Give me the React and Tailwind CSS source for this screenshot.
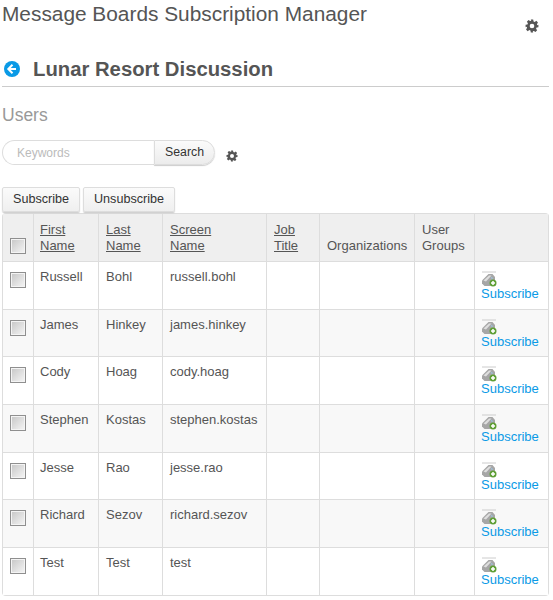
import React from 'react';

const users = [
  ['Russell', 'Bohl', 'russell.bohl'],
  ['James', 'Hinkey', 'james.hinkey'],
  ['Cody', 'Hoag', 'cody.hoag'],
  ['Stephen', 'Kostas', 'stephen.kostas'],
  ['Jesse', 'Rao', 'jesse.rao'],
  ['Richard', 'Sezov', 'richard.sezov'],
  ['Test', 'Test', 'test'],
];

const Gear = ({ className }) => (
  <svg viewBox="0 0 24 24" className={className} fill="#555">
    <path fillRule="evenodd" d="M10 1h4l.7 3.2 1.9.8 2.8-1.8 2.8 2.8-1.8 2.8.8 1.9L23 10v4l-3.2.7-.8 1.9 1.8 2.8-2.8 2.8-2.8-1.8-1.9.8L14 23h-4l-.7-3.2-1.9-.8-2.8 1.8-2.8-2.8 1.8-2.8-.8-1.9L1 14v-4l3.2-.7.8-1.9-1.8-2.8 2.8-2.8 2.8 1.8 1.9-.8zM12 8a4 4 0 1 0 0 8 4 4 0 0 0 0-8z" />
  </svg>
);

const BackIcon = () => (
  <svg viewBox="0 0 16 16" className="w-4 h-4 ml-[2px]">
    <circle cx="8" cy="8" r="8" fill="#0a9ae6" />
    <path d="M8.5 3.8 4.3 8l4.2 4.2M4.6 8h7.4" fill="none" stroke="#fff" strokeWidth="2" />
  </svg>
);

const SubscribeIcon = () => (
  <svg viewBox="0 0 16 16" className="w-4 h-4 block mb-[-1px]">
    <path d="M1 1h14" stroke="#ccc" strokeWidth="1" />
    <path d="M1 9.5 7.5 3h4l2.5 3v3l-5 6H3.5L1 12.5z" fill="#a6a6a6" />
    <path d="M2.5 9.5 8 4.5h2.5L5 10.5z" fill="#dedede" />
    <path d="M9.5 5.5 12 7l-1 1.5z" fill="#9cc3e0" />
    <circle cx="12" cy="12" r="3.5" fill="#5f9f35" />
    <path d="M12 10v4M10 12h4" stroke="#fff" strokeWidth="1.5" />
  </svg>
);

const Check = () => (
  <span className="block w-[16px] h-[16px] border border-[#8f8f8f] bg-gradient-to-br from-[#c6c6c6] to-[#f6f6f6] shadow-[inset_0_0_0_1px_#f4f4f4]" />
);

const Btn = ({ children }) => (
  <button className="h-[25px] px-[10px] text-[12.6px] text-[#333] border border-[#ddd] rounded-[2px] bg-gradient-to-b from-[#fbfbfb] to-[#efefef] shadow-[0_1px_1px_rgba(0,0,0,0.2)]">
    {children}
  </button>
);

const Th = ({ className = 'align-top pt-[8px] pb-[7px] pl-[7px]', children }) => (
  <th className={`border border-[#ddd] bg-[#efefef] pr-[7px] text-left font-normal leading-[16px] text-[13px] text-[#555] ${className}`}>
    {children}
  </th>
);

const Td = ({ className = 'pl-[7px]', children }) => (
  <td className={`border border-[#ddd] pr-[7px] pt-[7px] align-top leading-[16px] ${className}`}>{children}</td>
);

export default function App() {
  return (
    <div className="w-[553px] h-[600px] overflow-hidden bg-white font-['Liberation_Sans',Arial,sans-serif] text-[13px] text-[#555]">
      <div className="flex justify-between pl-[2px] pr-[14px]">
        <h1 className="text-[20.85px] leading-[28px]">Message Boards Subscription Manager</h1>
        <Gear className="w-[14px] h-[14px] mt-[19px]" />
      </div>

      <div className="mt-[11px] mx-[2px] w-[547px] h-[43px] pt-[8px] flex items-center border-b border-[#ccc]">
        <BackIcon />
        <h2 className="ml-[13px] text-[20.3px] font-bold leading-[28px]">Lunar Resort Discussion</h2>
      </div>

      <h3 className="ml-[2px] mt-[16px] text-[17.5px] leading-[24px] text-[#999]">Users</h3>

      <div className="ml-[2px] mt-[13px] flex items-center">
        <div className="flex h-[25px] w-[213px]">
          <input
            placeholder="Keywords"
            className="w-[152px] h-[25px] pl-[14px] border border-[#ddd] border-r-0 rounded-l-[13px] text-[12px] placeholder-[#bbb] outline-none"
          />
          <button className="flex-1 text-[#333] border border-[#ddd] rounded-r-[13px] bg-gradient-to-b from-[#fbfbfb] to-[#ececec] shadow-[0_1px_1px_rgba(0,0,0,0.2)] text-[12.3px]">
            Search
          </button>
        </div>
        <Gear className="w-[12px] h-[12px] ml-[11px] mt-[7px]" />
      </div>

      <div className="ml-[2px] mt-[22px] flex gap-[3px]">
        <Btn>Subscribe</Btn>
        <Btn>Unsubscribe</Btn>
      </div>

      <div className="ml-[2px] w-[547px] mt-px rounded-[4px] overflow-hidden">
        <table className="w-full table-fixed border-collapse">
          <colgroup>
            <col className="w-[31px]" />
            <col className="w-[65px]" />
            <col className="w-[64px]" />
            <col className="w-[104px]" />
            <col className="w-[53px]" />
            <col className="w-[95px]" />
            <col className="w-[60px]" />
            <col />
          </colgroup>
          <thead>
            <tr className="h-[47px]">
              <Th className="align-bottom pb-[7px] pl-[7px]"><Check /></Th>
              <Th className="align-top pt-[8px] pb-[7px] pl-[6px]"><span className="underline">First<br />Name</span></Th>
              <Th><span className="underline">Last<br />Name</span></Th>
              <Th><span className="underline">Screen<br />Name</span></Th>
              <Th><span className="underline">Job<br />Title</span></Th>
              <Th className="align-bottom pb-[7px] pl-[7px]">Organizations</Th>
              <Th>User<br />Groups</Th>
              <Th />
            </tr>
          </thead>
          <tbody>
            {users.map((u, i) => (
              <tr key={u[2]} className={`h-[47.7px] ${i % 2 ? 'bg-[#f8f8f8]' : 'bg-white'}`}>
                <Td><span className="block mt-[3px]"><Check /></span></Td>
                <Td className="pl-[6px]">{u[0]}</Td>
                <Td>{u[1]}</Td>
                <Td>{u[2]}</Td>
                <Td />
                <Td />
                <Td />
                <td className="border border-[#ddd] px-[6px] pt-[9px] align-top leading-[16px]">
                  <SubscribeIcon />
                  <a className="text-[#0a9ae6]">Subscribe</a>
                </td>
              </tr>
            ))}
          </tbody>
        </table>
      </div>
    </div>
  );
}
